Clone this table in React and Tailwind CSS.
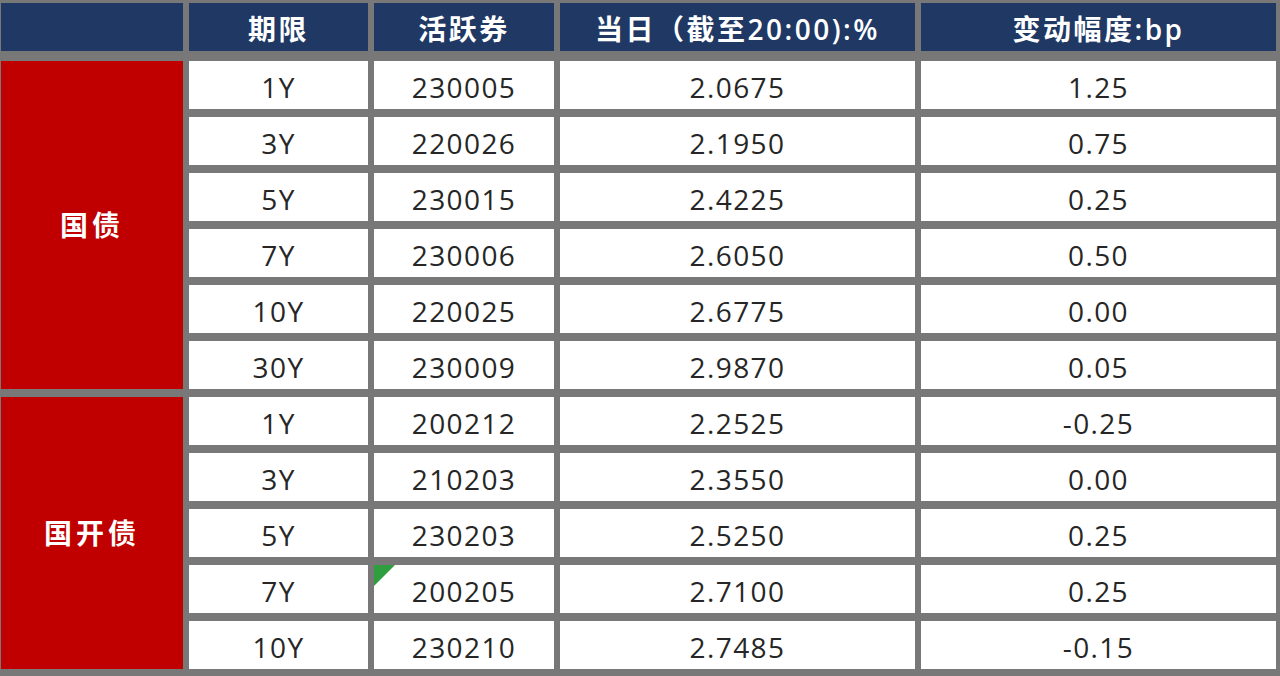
import React from 'react';

const cols = 'grid grid-cols-[182px_179px_180px_355px_355px] gap-x-[6px]';

const groups = [
  {
    name: '国债',
    span: 'row-span-6',
    rows: [
      ['1Y', '230005', '2.0675', '1.25'],
      ['3Y', '220026', '2.1950', '0.75'],
      ['5Y', '230015', '2.4225', '0.25'],
      ['7Y', '230006', '2.6050', '0.50'],
      ['10Y', '220025', '2.6775', '0.00'],
      ['30Y', '230009', '2.9870', '0.05'],
    ],
  },
  {
    name: '国开债',
    span: 'row-span-5',
    rows: [
      ['1Y', '200212', '2.2525', '-0.25'],
      ['3Y', '210203', '2.3550', '0.00'],
      ['5Y', '230203', '2.5250', '0.25'],
      ['7Y', '200205', '2.7100', '0.25', true],
      ['10Y', '230210', '2.7485', '-0.15'],
    ],
  },
];

const font = { fontFamily: '"Open Sans", "Noto Sans CJK SC", sans-serif' };

function Cell({ children, marker, className = '' }) {
  return (
    <div className={`relative flex items-center justify-center bg-white text-[28px] tracking-[1.4px] text-[#262626] ${className}`}>
      {marker && (
        <svg className="absolute left-0 top-0" width="21" height="21" viewBox="0 0 21 21">
          <polygon points="0,0 21,0 0,21" fill="#2e9e3e" />
        </svg>
      )}
      <span className="pt-[4px]">{children}</span>
    </div>
  );
}

export default function App() {
  const headers = ['', '期限', '活跃券', '当日（截至20:00):%', '变动幅度:bp'];

  return (
    <div className="w-[1280px] h-[676px] bg-[#787878] pt-[3px] pl-px pr-[4px] pb-[7px]" style={font}>
      {/* Header */}
      <div className={`${cols} h-[48px]`}>
        {headers.map((h, i) => (
          <div key={i} className="flex items-center justify-center bg-[#1f3864] pt-[3px] text-[28px] font-semibold tracking-[2.5px] text-white">
            {h}
          </div>
        ))}
      </div>

      {/* Body */}
      <div className={`${cols} mt-[10px] grid-rows-[repeat(11,48px)] gap-y-[8px]`}>
        {groups.map((g) => (
          <React.Fragment key={g.name}>
            <div className={`${g.span} flex items-center justify-center bg-[#c00000] text-[28px] font-semibold tracking-[4px] text-white`}>
              {g.name}
            </div>
            {g.rows.map((r, idx) => (
              <React.Fragment key={idx}>
                <Cell className="col-start-2">{r[0]}</Cell>
                <Cell marker={r[4]}>{r[1]}</Cell>
                <Cell>{r[2]}</Cell>
                <Cell>{r[3]}</Cell>
              </React.Fragment>
            ))}
          </React.Fragment>
        ))}
      </div>
    </div>
  );
}
